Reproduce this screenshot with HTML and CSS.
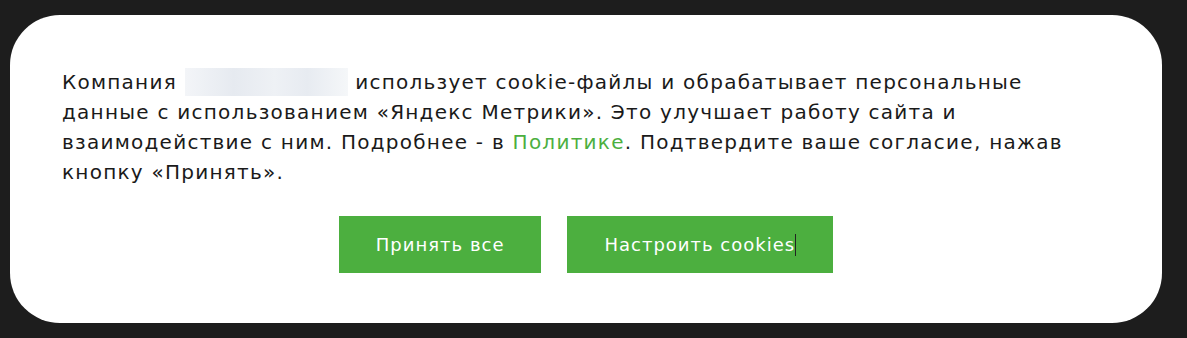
FILE: index.html
```html
<!DOCTYPE html>
<html lang="ru">
<head>
    <meta charset="UTF-8">
    <meta name="viewport" content="width=device-width, initial-scale=1.0">
    <title>Cookie</title>
    <link rel="stylesheet" href="styles.css">
</head>
<body>
    <div class="cookie-card">
        <p class="cookie-text">
            Компания <span class="blurred-name"></span> использует cookie-файлы и обрабатывает персональные<br>
            данные с использованием «Яндекс Метрики». Это улучшает работу сайта и<br>
            взаимодействие с ним. Подробнее - в <a href="#" class="policy-link">Политике</a>. Подтвердите ваше согласие, нажав<br>
            кнопку «Принять».
        </p>
        <div class="cookie-buttons">
            <button class="cookie-btn">Принять все</button>
            <button class="cookie-btn">Настроить cookies<span class="caret"></span></button>
        </div>
    </div>
</body>
</html>
```

FILE: styles.css
```css
body {
    margin: 0;
    padding: 15px 25px 15px 10px;
    background: #1d1d1d;
    font-family: "DejaVu Sans", "Noto Sans", sans-serif;
}
.cookie-card {
    background: #ffffff;
    border-radius: 50px;
    height: 308px;
    box-sizing: border-box;
    padding: 52px 52px 0 52px;
}
.cookie-text {
    margin: 0;
    font-size: 20px;
    line-height: 30px;
    letter-spacing: 1.25px;
    color: #1a1a1a;
}
.blurred-name {
    display: inline-block;
    width: 163px;
    height: 28px;
    vertical-align: -7px;
    background: linear-gradient(90deg, #f3f5f8 0%, #e6eaf0 30%, #eef1f5 55%, #e7ebf1 75%, #f5f7f9 100%);
}
.policy-link {
    color: #4caf3f;
    text-decoration: none;
}
.cookie-buttons {
    display: flex;
    justify-content: center;
    gap: 26px;
    margin-top: 29px;
}
.cookie-btn {
    background: #4caf3f;
    color: #ffffff;
    border: none;
    height: 57px;
    padding: 0 37px;
    font-family: inherit;
    font-size: 18px;
    letter-spacing: 1px;
    cursor: pointer;
}
.caret {
    display: inline-block;
    width: 1px;
    height: 22px;
    background: #222;
    vertical-align: -5px;
}
```
